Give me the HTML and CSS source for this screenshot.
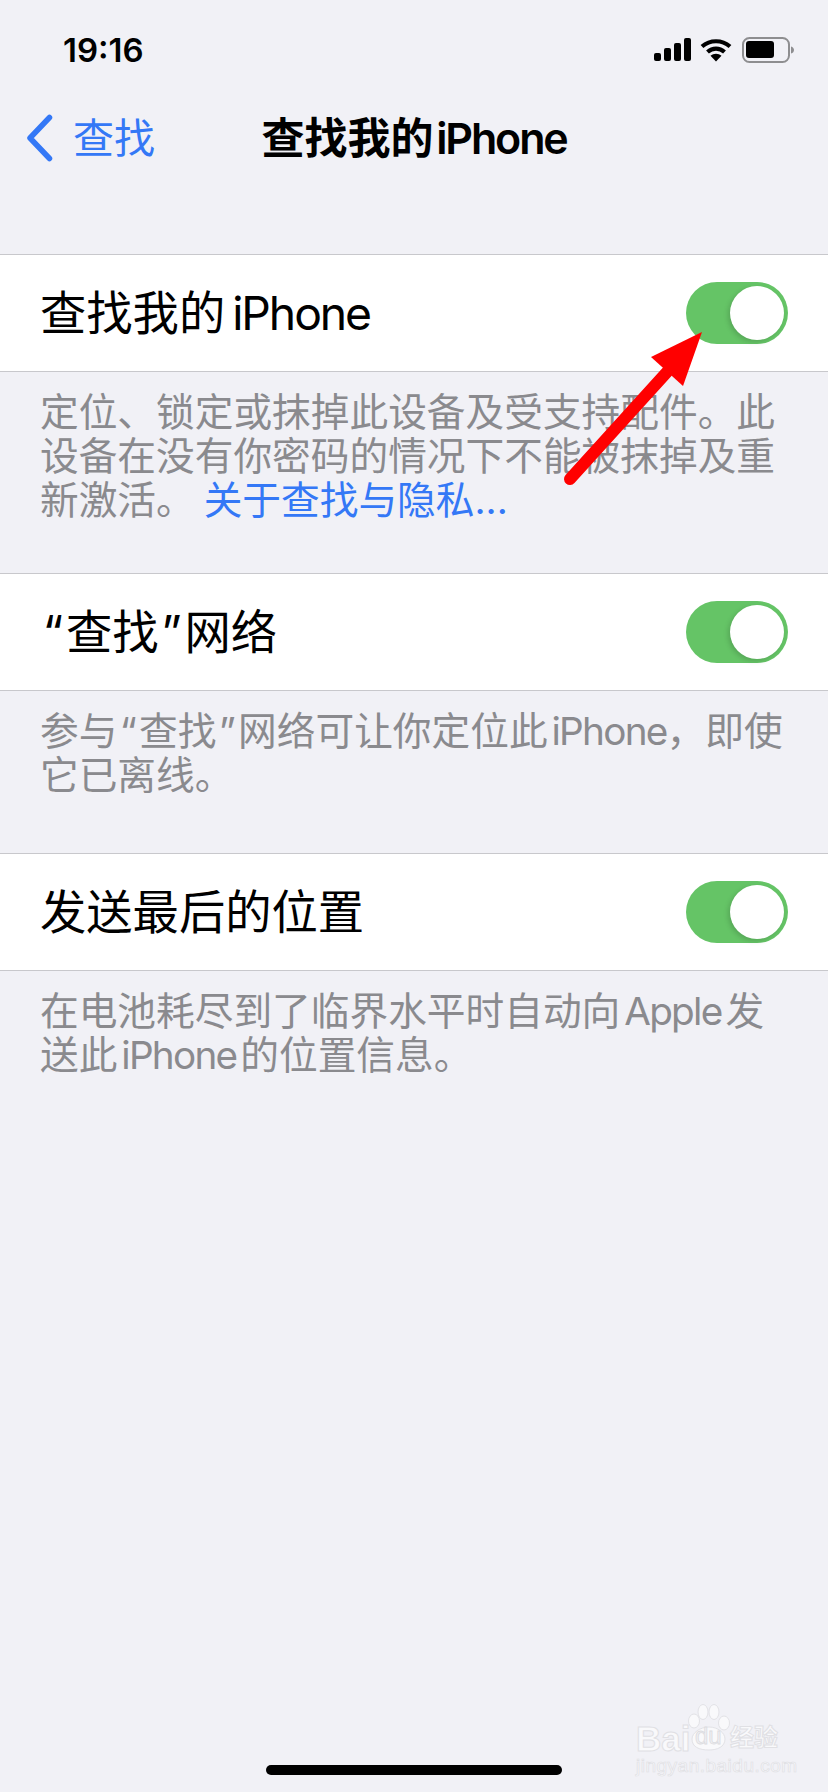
FILE: index.html
```html
<!DOCTYPE html>
<html lang="zh-CN">
<head>
<meta charset="utf-8">
<title>查找我的 iPhone</title>
<link rel="stylesheet" href="styles.css">
</head>
<body>
<div class="page">
  <header class="status">
    <span class="time">19:16</span>
    <div class="status-icons">
      <svg class="sig" width="37" height="24" viewBox="0 0 37 24"><rect x="0" y="15" width="7" height="8" rx="2"/><rect x="10" y="10" width="7" height="13" rx="2"/><rect x="20" y="5" width="7" height="18" rx="2"/><rect x="30" y="0" width="7" height="23" rx="2"/></svg>
      <svg class="wifi" width="32" height="24" viewBox="0 0 32 24"><path d="M2 8.500C10 1.500 22 1.500 30 8.500" fill="none" stroke="#000" stroke-width="4.200"/><path d="M7.500 14C12.500 9.500 19.500 9.500 24.500 14" fill="none" stroke="#000" stroke-width="4.200"/><path d="M10.500 17.800C13.500 15 18.500 15 21.500 17.800L16 23.500Z"/></svg>
      <svg class="batt" width="54" height="26" viewBox="0 0 54 26"><rect x="2" y="1" width="46" height="24" rx="6.500" fill="none" stroke="#8e8e90" stroke-width="2"/><rect x="5" y="4" width="28" height="17" rx="3"/><path d="M50 9.500C52 10 53 11.500 53 13C53 14.500 52 16 50 16.500Z" fill="#8e8e90"/></svg>
    </div>
  </header>

  <nav class="nav">
    <div class="back">
      <svg class="chev" width="30" height="48" viewBox="0 0 30 48"><path d="M24.500 3.500L5 24L24.500 44.500" fill="none" stroke="#3478f6" stroke-width="5.500" stroke-linecap="round" stroke-linejoin="round"/></svg>
      <span>查找</span>
    </div>
    <h1 class="title">查找我的 <span class="en">iPhone</span></h1>
  </nav>

  <section class="group group-first">
    <div class="row"><span class="label">查找我的 <span class="en">iPhone</span></span><span class="toggle"><span class="knob"></span></span></div>
    <p class="note">定位、锁定或抹掉此设备及受支持配件。此<br>设备在没有你密码的情况下不能被抹掉及重<br>新激活。 <a class="link">关于查找与隐私...</a></p>
  </section>

  <section class="group group-second">
    <div class="row"><span class="label"><span class="q">“</span>查找<span class="q">”</span>网络</span><span class="toggle"><span class="knob"></span></span></div>
    <p class="note">参与<span class="q">“</span>查找<span class="q">”</span>网络可让你定位此 <span class="en">iPhone</span>，即使<br>它已离线。</p>
  </section>

  <section class="group group-third">
    <div class="row"><span class="label">发送最后的位置</span><span class="toggle"><span class="knob"></span></span></div>
    <p class="note">在电池耗尽到了临界水平时自动向 <span class="en">Apple</span> 发<br>送此 <span class="en">iPhone</span> 的位置信息。</p>
  </section>

  <div class="home"></div>

  <svg class="arrow" width="150" height="170" viewBox="0 0 150 170"><path d="M10 159L107 52" stroke="#ff0000" stroke-width="12" stroke-linecap="round"/><path d="M142 12L91 37L123 66Z" fill="#ff0000"/></svg>

  <div class="mark">
    <div class="mark-top">
      <span class="mark-bai">Bai</span>
      <span class="mark-paw">
        <svg width="43" height="48" viewBox="0 0 43 48"><g fill="#f9f9fb" stroke="#e2e2e6" stroke-width="1"><ellipse cx="7" cy="18" rx="5.500" ry="7"/><ellipse cx="16" cy="9" rx="5" ry="7.500"/><ellipse cx="27" cy="9" rx="5" ry="7.500"/><ellipse cx="37" cy="20" rx="5.500" ry="7"/><path d="M22 24C31 24 38 30 38 36C38 44 30 47 22 47C12 47 5 44 5 36C5 30 13 24 22 24Z"/></g></svg>
        <span class="mark-du">du</span>
      </span>
      <span class="mark-cn">经验</span>
    </div>
    <div class="mark-url">jingyan.baidu.com</div>
  </div>
</div>
</body>
</html>
```

FILE: styles.css
```css
* { box-sizing: border-box; }
html, body { margin: 0; padding: 0; }
body {
  background: #f1f1f6;
  font-family: Inter, "Noto Sans CJK SC", sans-serif;
  color: #000;
}
.page {
  position: relative;
  width: 828px;
  height: 1792px;
  overflow: hidden;
  display: flex;
  flex-direction: column;
}
.status {
  height: 100px;
  padding: 30px 33px 0 63px;
  display: flex;
  justify-content: space-between;
  align-items: flex-start;
}
.time { font-size: 33px; line-height: 40px; font-weight: 600; }
.status-icons { display: flex; align-items: center; gap: 9px; height: 40px; }
.nav {
  height: 76px;
  position: relative;
  display: flex;
  align-items: center;
  justify-content: center;
}
.back {
  position: absolute;
  left: 25px;
  top: 14px;
  display: flex;
  align-items: center;
  gap: 18px;
  color: #3478f6;
  font-size: 41px;
  line-height: 48px;
}
.title { margin: 0; font-size: 43px; font-weight: 600; line-height: 48px; word-spacing: -8px; }
.title .en { letter-spacing: -.05em; }
.en { letter-spacing: -.045em; }
.q { margin: 0 .06em; }
.group-first { margin-top: 78px; }
.row {
  height: 118px;
  background: #fff;
  border-top: 1px solid #c8c8cc;
  border-bottom: 1px solid #c8c8cc;
  padding: 0 40px 0 40px;
  display: flex;
  align-items: center;
  justify-content: space-between;
}
.label { font-size: 46.300px; line-height: 52px; word-spacing: -6px; }
.toggle {
  width: 102px;
  height: 62px;
  border-radius: 31px;
  background: #65c466;
  position: relative;
  flex: none;
}
.knob {
  position: absolute;
  right: 4px;
  top: 4px;
  width: 54px;
  height: 54px;
  border-radius: 50%;
  background: #fff;
  box-shadow: -2px 2px 5px rgba(0,0,0,.15);
}
.note {
  margin: 0;
  padding: 18px 0 0 40px;
  color: #8a8a8e;
  font-size: 38.700px;
  line-height: 44px;
  word-spacing: -7px;
  white-space: nowrap;
}
.group-first .note { height: 201px; }
.group-second .note { height: 162px; }
.link { color: #3478f6; margin-left: 5px; }
.home {
  position: absolute;
  left: 266px;
  bottom: 17px;
  width: 296px;
  height: 10px;
  border-radius: 5px;
  background: #000;
}
.arrow { position: absolute; left: 560px; top: 320px; }
.mark {
  position: absolute;
  left: 636px;
  top: 1703px;
  width: 150px;
  color: #f9f9fb;
  -webkit-text-stroke: 1px #e0e0e4;
}
.mark-top { display: flex; align-items: flex-end; height: 48px; }
.mark-bai { font-family: "Liberation Sans", sans-serif; font-weight: 700; font-size: 35px; line-height: 35px; margin-bottom: -5px; width: 51px; letter-spacing: 0; }
.mark-paw { position: relative; width: 43px; height: 48px; flex: none; }
.mark-paw svg { display: block; }
.mark-du {
  position: absolute;
  left: 8px;
  top: 21px;
  font-family: "Liberation Sans", sans-serif;
  font-size: 24px;
  line-height: 24px;
  font-weight: 400;
  color: #f0f0f3;
  -webkit-text-stroke: .8px #dcdce0;
}
.mark-cn { font-size: 24px; line-height: 26px; font-weight: 700; white-space: nowrap; }
.mark-url { font-family: "Liberation Sans", sans-serif; font-size: 19px; line-height: 22px; margin-top: 4px; letter-spacing: .5px; white-space: nowrap; -webkit-text-stroke: .7px #e0e0e4; }
```
